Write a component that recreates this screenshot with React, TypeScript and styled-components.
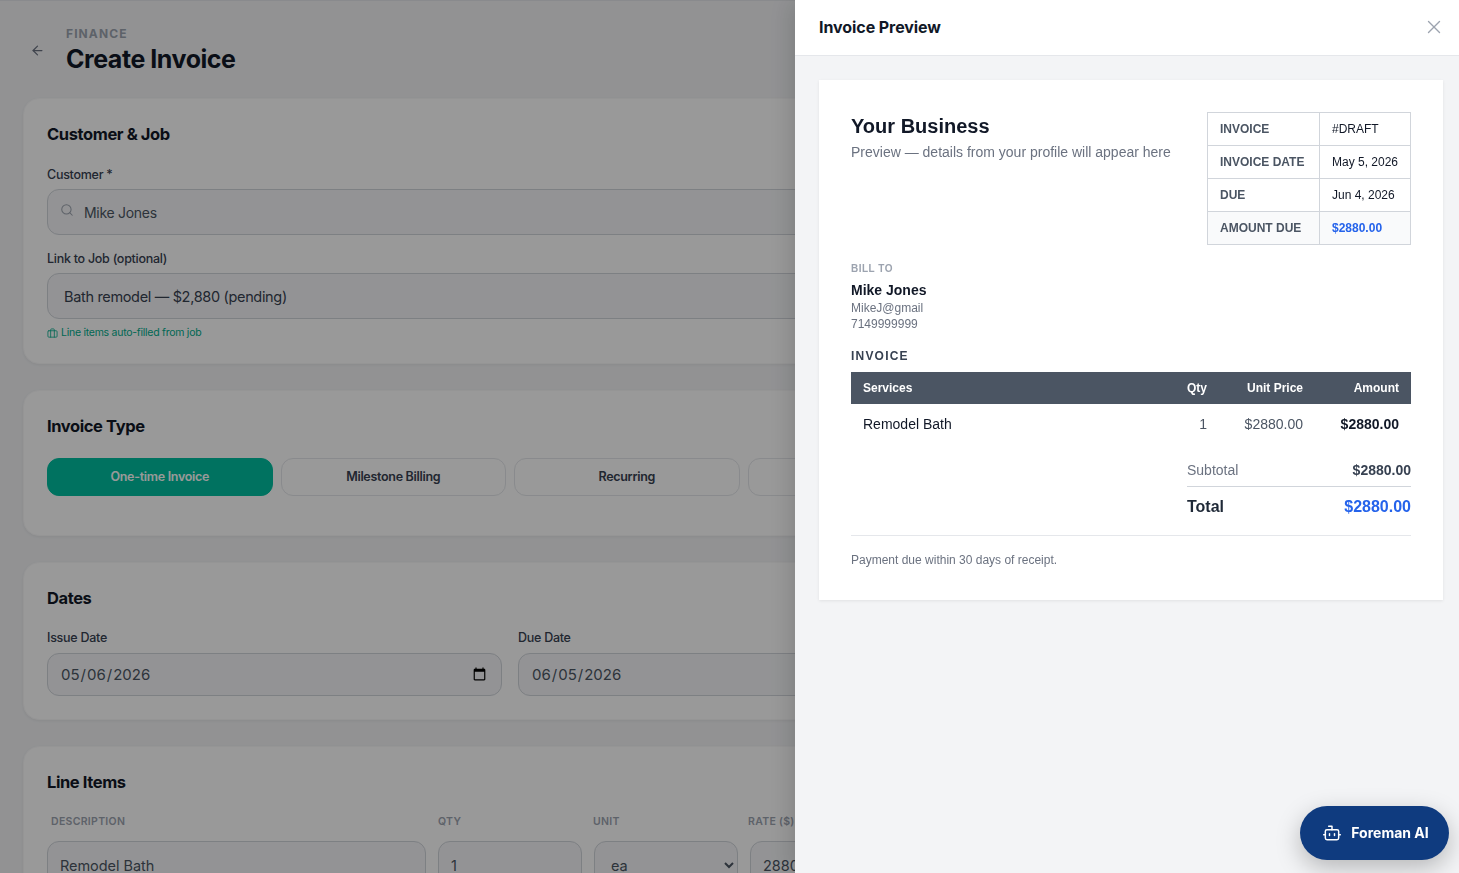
import React, { FC } from "react";
import styled, { createGlobalStyle } from "styled-components";
import { ArrowLeft, Bot, Briefcase, Search, X } from "lucide-react";

const INVOICE_TYPES = ["One-time Invoice", "Milestone Billing", "Recurring", ""];

const META_ROWS = [
  { label: "INVOICE", value: "#DRAFT" },
  { label: "INVOICE DATE", value: "May 5, 2026" },
  { label: "DUE", value: "Jun 4, 2026" },
];

const App: FC = () => {
  return (
    <>
      <GlobalStyle />
      <StyledPage>
        <StyledHeader>
          <StyledBack>
            <ArrowLeft size={15} strokeWidth={2} />
          </StyledBack>
          <div>
            <StyledEyebrow>FINANCE</StyledEyebrow>
            <StyledPageTitle>Create Invoice</StyledPageTitle>
          </div>
        </StyledHeader>

        <StyledCard>
          <StyledCardTitle>Customer &amp; Job</StyledCardTitle>
          <StyledLabel $top={1} $bottom={6}>
            Customer *
          </StyledLabel>
          <StyledSearchBox>
            <Search size={14} strokeWidth={1.75} />
            <span>Mike Jones</span>
          </StyledSearchBox>
          <StyledLabel $top={16} $bottom={6}>
            Link to Job (optional)
          </StyledLabel>
          <StyledJobBox>Bath remodel — $2,880 (pending)</StyledJobBox>
          <StyledHint>
            <Briefcase size={11} strokeWidth={1.75} />
            Line items auto-filled from job
          </StyledHint>
        </StyledCard>

        <StyledCard>
          <StyledCardTitle>Invoice Type</StyledCardTitle>
          <StyledTypeGrid>
            {INVOICE_TYPES.map((type, index) => (
              <StyledTypeButton key={index} $active={index === 0}>
                {type}
              </StyledTypeButton>
            ))}
          </StyledTypeGrid>
        </StyledCard>

        <StyledCard>
          <StyledCardTitle>Dates</StyledCardTitle>
          <StyledDateGrid>
            <div>
              <StyledLabel>Issue Date</StyledLabel>
              <StyledDateInput type="date" defaultValue="2026-05-06" />
            </div>
            <div>
              <StyledLabel>Due Date</StyledLabel>
              <StyledDateInput type="date" defaultValue="2026-06-05" />
            </div>
          </StyledDateGrid>
        </StyledCard>

        <StyledCard>
          <StyledCardTitle>Line Items</StyledCardTitle>
          <StyledLineHead>
            <span>DESCRIPTION</span>
            <span>QTY</span>
            <span>UNIT</span>
            <span>RATE ($)</span>
          </StyledLineHead>
          <StyledLineRow>
            <StyledCellInput defaultValue="Remodel Bath" />
            <StyledCellInput defaultValue="1" />
            <StyledCellSelect defaultValue="ea">
              <option value="ea">ea</option>
            </StyledCellSelect>
            <StyledCellInput defaultValue="2880" />
          </StyledLineRow>
        </StyledCard>
      </StyledPage>

      <StyledOverlay />

      <StyledDrawer>
        <StyledDrawerHeader>
          <StyledDrawerTitle>Invoice Preview</StyledDrawerTitle>
          <StyledClose>
            <X size={22} strokeWidth={1.5} />
          </StyledClose>
        </StyledDrawerHeader>
        <StyledDrawerBody>
          <StyledPaper>
            <StyledPaperTop>
              <div>
                <StyledBusiness>Your Business</StyledBusiness>
                <StyledBusinessNote>
                  Preview — details from your profile will appear here
                </StyledBusinessNote>
              </div>
              <StyledMeta>
                <tbody>
                  {META_ROWS.map((row) => (
                    <tr key={row.label}>
                      <StyledMetaLabel>{row.label}</StyledMetaLabel>
                      <StyledMetaValue>{row.value}</StyledMetaValue>
                    </tr>
                  ))}
                  <tr>
                    <StyledMetaLabel $shaded>AMOUNT DUE</StyledMetaLabel>
                    <StyledMetaValue $shaded>$2880.00</StyledMetaValue>
                  </tr>
                </tbody>
              </StyledMeta>
            </StyledPaperTop>

            <StyledBillTo>BILL TO</StyledBillTo>
            <StyledBillName>Mike Jones</StyledBillName>
            <StyledBillLines>
              <div>MikeJ@gmail</div>
              <div>7149999999</div>
            </StyledBillLines>

            <StyledSectionTag>INVOICE</StyledSectionTag>
            <StyledItems>
              <thead>
                <tr>
                  <StyledItemHead>Services</StyledItemHead>
                  <StyledItemHead $right>Qty</StyledItemHead>
                  <StyledItemHead $right>Unit Price</StyledItemHead>
                  <StyledItemHead $right>Amount</StyledItemHead>
                </tr>
              </thead>
              <tbody>
                <tr>
                  <StyledItemCell $color="#111827">Remodel Bath</StyledItemCell>
                  <StyledItemCell $right $color="#4b5563">
                    1
                  </StyledItemCell>
                  <StyledItemCell $right $color="#4b5563">
                    $2880.00
                  </StyledItemCell>
                  <StyledItemCell $right $bold $color="#111827">
                    $2880.00
                  </StyledItemCell>
                </tr>
              </tbody>
            </StyledItems>

            <StyledTotals>
              <StyledSubtotalRow>
                <span>Subtotal</span>
                <strong>$2880.00</strong>
              </StyledSubtotalRow>
              <StyledTotalRow>
                <span>Total</span>
                <strong>$2880.00</strong>
              </StyledTotalRow>
            </StyledTotals>

            <StyledTerms>Payment due within 30 days of receipt.</StyledTerms>
          </StyledPaper>
        </StyledDrawerBody>
      </StyledDrawer>

      <StyledAssistant>
        <Bot size={20} strokeWidth={1.75} />
        Foreman AI
      </StyledAssistant>
    </>
  );
};

const GlobalStyle = createGlobalStyle`
  html, body {
    margin: 0;
    height: 100%;
    overflow: hidden;
    background: #f3f4f6;
  }
  * {
    box-sizing: border-box;
  }
`;

const leftFont = `"Inter", "Liberation Sans", sans-serif`;
const paperFont = `"Liberation Sans", Arial, sans-serif`;

const StyledPage = styled.main`
  width: 1020px;
  height: 100vh;
  overflow: hidden;
  padding: 25px 23px 0;
  border-top: 1px solid #e5e7eb;
  font-family: ${leftFont};
`;

const StyledHeader = styled.header`
  display: flex;
  align-items: center;
  gap: 21px;
  height: 49px;
  margin-bottom: 23px;
`;

const StyledBack = styled.button`
  display: flex;
  padding: 0;
  margin: 0 0 0 7px;
  border: 0;
  background: none;
  color: #6b7280;
`;

const StyledEyebrow = styled.div`
  font-size: 12px;
  line-height: 16px;
  font-weight: 700;
  letter-spacing: 1.1px;
  color: #9ca3af;
`;

const StyledPageTitle = styled.h1`
  margin: 1px 0 0;
  font-size: 25px;
  line-height: 32px;
  font-weight: 700;
  letter-spacing: -0.45px;
  color: #111827;
`;

const StyledCard = styled.section`
  padding: 23px 23px 23px;
  margin-bottom: 26px;
  background: #fff;
  border: 1px solid #f8f8f9;
  border-radius: 16px;
  box-shadow: 0 1px 3px rgba(0, 0, 0, 0.06);
`;

const StyledCardTitle = styled.h2`
  margin: 0 0 20px;
  font-size: 16.5px;
  line-height: 24px;
  font-weight: 700;
  letter-spacing: -0.4px;
  color: #111827;
`;

const StyledLabel = styled.label<{ $top?: number; $bottom?: number }>`
  display: block;
  padding-top: ${(props) => props.$top || 0}px;
  margin-bottom: ${(props) => props.$bottom ?? 7}px;
  font-size: 12.5px;
  line-height: 16px;
  font-weight: 500;
  letter-spacing: -0.27px;
  color: #374151;
`;

const StyledSearchBox = styled.div`
  display: flex;
  align-items: center;
  gap: 10px;
  height: 46px;
  padding-left: 12px;
  font-size: 14px;
  letter-spacing: -0.3px;
  color: #4b5563;
  background: #f5f6f8;
  border: 1px solid #d1d5db;
  border-radius: 12px;

  svg {
    color: #9ca3af;
    margin-top: -5px;
  }
`;

const StyledJobBox = styled.div`
  display: flex;
  align-items: center;
  height: 46px;
  padding-left: 16px;
  font-size: 14.5px;
  letter-spacing: -0.33px;
  color: #374151;
  background: #f5f6f8;
  border: 1px solid #d1d5db;
  border-radius: 12px;
`;

const StyledHint = styled.div`
  display: flex;
  align-items: center;
  gap: 3px;
  margin-top: 7px;
  font-size: 10.5px;
  line-height: 14px;
  letter-spacing: -0.26px;
  color: #00ad8c;
`;

const StyledTypeGrid = styled.div`
  display: grid;
  grid-template-columns: repeat(4, 1fr);
  gap: 8px;
  padding-bottom: 16px;
`;

const StyledTypeButton = styled.button<{ $active?: boolean }>`
  height: 38px;
  padding: 0 0 1px;
  font-family: ${leftFont};
  font-size: 12.5px;
  font-weight: 600;
  letter-spacing: -0.3px;
  color: ${(props) => (props.$active ? "#fff" : "#374151")};
  background: ${(props) => (props.$active ? "#00bfa0" : "#fff")};
  border: 1px solid ${(props) => (props.$active ? "#00bfa0" : "#e5e7eb")};
  border-radius: 12px;
`;

const StyledDateGrid = styled.div`
  display: grid;
  grid-template-columns: 1fr 1fr;
  gap: 16px;
`;

const StyledDateInput = styled.input`
  display: block;
  width: 100%;
  height: 43px;
  padding: 0 12px;
  font-family: ${leftFont};
  font-size: 15px;
  color: #4b5563;
  background: #f5f6f8;
  border: 1px solid #d1d5db;
  border-radius: 12px;
`;

const StyledLineHead = styled.div`
  display: grid;
  grid-template-columns: 387px 155px 155px 1fr;
  padding: 1px 0 0 4px;
  font-size: 10.5px;
  line-height: 14px;
  font-weight: 600;
  letter-spacing: 0.3px;
  color: #9ca3af;
`;

const StyledLineRow = styled.div`
  display: grid;
  grid-template-columns: 379px 144px 144px 1fr;
  gap: 12px;
  margin-top: 12px;
`;

const StyledCellInput = styled.input`
  width: 100%;
  height: 48px;
  padding: 0 12px;
  font-family: ${leftFont};
  font-size: 14.5px;
  letter-spacing: -0.05px;
  color: #4b5563;
  background: #f5f6f8;
  border: 1px solid #d1d5db;
  border-radius: 12px;
`;

const StyledCellSelect = styled.select`
  width: 100%;
  height: 48px;
  padding: 0 12px;
  font-family: ${leftFont};
  font-size: 14.5px;
  color: #4b5563;
  background: #f5f6f8;
  border: 1px solid #d1d5db;
  border-radius: 12px;
`;

const StyledOverlay = styled.div`
  position: fixed;
  inset: 0;
  background: rgba(0, 0, 0, 0.4);
`;

const StyledDrawer = styled.aside`
  position: fixed;
  top: 0;
  right: 0;
  bottom: 0;
  width: 664px;
  display: flex;
  flex-direction: column;
  background: #f3f4f6;
  box-shadow: -4px 0 24px rgba(0, 0, 0, 0.15);
`;

const StyledDrawerHeader = styled.div`
  display: flex;
  align-items: center;
  justify-content: space-between;
  height: 56px;
  padding: 0 14px 1px 24px;
  background: #fff;
  border-bottom: 1px solid #e5e7eb;
`;

const StyledDrawerTitle = styled.h3`
  margin: 0;
  font-family: ${leftFont};
  font-size: 16px;
  font-weight: 700;
  letter-spacing: -0.07px;
  color: #111827;
`;

const StyledClose = styled.button`
  display: flex;
  padding: 0;
  border: 0;
  background: none;
  color: #9ca3af;
`;

const StyledDrawerBody = styled.div`
  flex: 1;
  padding: 24px 16px 24px 24px;
`;

const StyledPaper = styled.div`
  height: 520px;
  padding: 32px;
  font-family: ${paperFont};
  background: #fff;
  box-shadow: 0 1px 3px rgba(0, 0, 0, 0.08);
`;

const StyledPaperTop = styled.div`
  display: flex;
  justify-content: space-between;
  align-items: flex-start;
`;

const StyledBusiness = styled.div`
  margin-top: 2px;
  font-size: 20px;
  line-height: 24px;
  font-weight: 700;
  color: #111827;
`;

const StyledBusinessNote = styled.div`
  margin-top: 4px;
  font-size: 14px;
  line-height: 20px;
  color: #6b7280;
`;

const StyledMeta = styled.table`
  width: 204px;
  table-layout: fixed;
  border-collapse: collapse;
  font-size: 12px;
`;

const StyledMetaLabel = styled.td<{ $shaded?: boolean }>`
  width: 112px;
  height: 33px;
  padding: 0 12px;
  font-weight: 700;
  color: #4b5563;
  background: ${(props) => (props.$shaded ? "#f9fafb" : "#fff")};
  border: 1px solid #d1d5db;
  white-space: nowrap;
`;

const StyledMetaValue = styled.td<{ $shaded?: boolean }>`
  height: 33px;
  padding: 0 12px;
  font-weight: ${(props) => (props.$shaded ? 700 : 400)};
  color: ${(props) => (props.$shaded ? "#2563eb" : "#111827")};
  background: ${(props) => (props.$shaded ? "#f9fafb" : "#fff")};
  border: 1px solid #d1d5db;
  white-space: nowrap;
`;

const StyledBillTo = styled.div`
  margin-top: 17px;
  font-size: 10px;
  line-height: 14px;
  font-weight: 700;
  letter-spacing: 0.5px;
  color: #9ca3af;
`;

const StyledBillName = styled.div`
  margin-top: 6px;
  font-size: 14px;
  line-height: 16px;
  font-weight: 700;
  color: #111827;
`;

const StyledBillLines = styled.div`
  margin-top: 2px;
  font-size: 12px;
  line-height: 16px;
  color: #6b7280;
`;

const StyledSectionTag = styled.div`
  margin-top: 16px;
  font-size: 12px;
  line-height: 16px;
  font-weight: 700;
  letter-spacing: 1.2px;
  color: #374151;
`;

const StyledItems = styled.table`
  width: 100%;
  margin-top: 8px;
  table-layout: fixed;
  border-collapse: collapse;
`;

const StyledItemHead = styled.th<{ $right?: boolean }>`
  height: 32px;
  padding: 0 12px;
  font-size: 12px;
  font-weight: 700;
  text-align: ${(props) => (props.$right ? "right" : "left")};
  color: #fff;
  background: #4b5563;

  &:nth-child(2) {
    width: 68px;
  }
  &:nth-child(3),
  &:nth-child(4) {
    width: 96px;
  }
`;

const StyledItemCell = styled.td<{
  $right?: boolean;
  $bold?: boolean;
  $color: string;
}>`
  height: 40px;
  padding: 0 12px;
  font-size: 14px;
  font-weight: ${(props) => (props.$bold ? 700 : 400)};
  text-align: ${(props) => (props.$right ? "right" : "left")};
  color: ${(props) => props.$color};
`;

const StyledTotals = styled.div`
  width: 224px;
  margin: 10px 0 0 auto;
`;

const StyledSubtotalRow = styled.div`
  display: flex;
  justify-content: space-between;
  height: 33px;
  padding-top: 8px;
  font-size: 14px;
  line-height: 16px;
  color: #6b7280;
  border-bottom: 1px solid #d1d5db;

  strong {
    color: #374151;
  }
`;

const StyledTotalRow = styled.div`
  display: flex;
  justify-content: space-between;
  align-items: center;
  height: 39px;
  font-size: 16px;
  font-weight: 700;
  color: #1f2937;

  strong {
    color: #2563eb;
  }
`;

const StyledTerms = styled.div`
  margin-top: 9px;
  padding-top: 16px;
  font-size: 12px;
  line-height: 16px;
  color: #6b7280;
  border-top: 1px solid #e5e7eb;
`;

const StyledAssistant = styled.button`
  position: fixed;
  right: 10px;
  bottom: 13px;
  display: flex;
  align-items: center;
  justify-content: center;
  gap: 9px;
  width: 149px;
  height: 54px;
  padding: 0 0 1px 2px;
  font-family: "Inter", sans-serif;
  font-size: 14px;
  font-weight: 700;
  color: #fff;
  background: #0f3b7f;
  border: 0;
  border-radius: 27px;
  box-shadow: 0 8px 24px rgba(0, 0, 0, 0.25);
`;

export default App;
